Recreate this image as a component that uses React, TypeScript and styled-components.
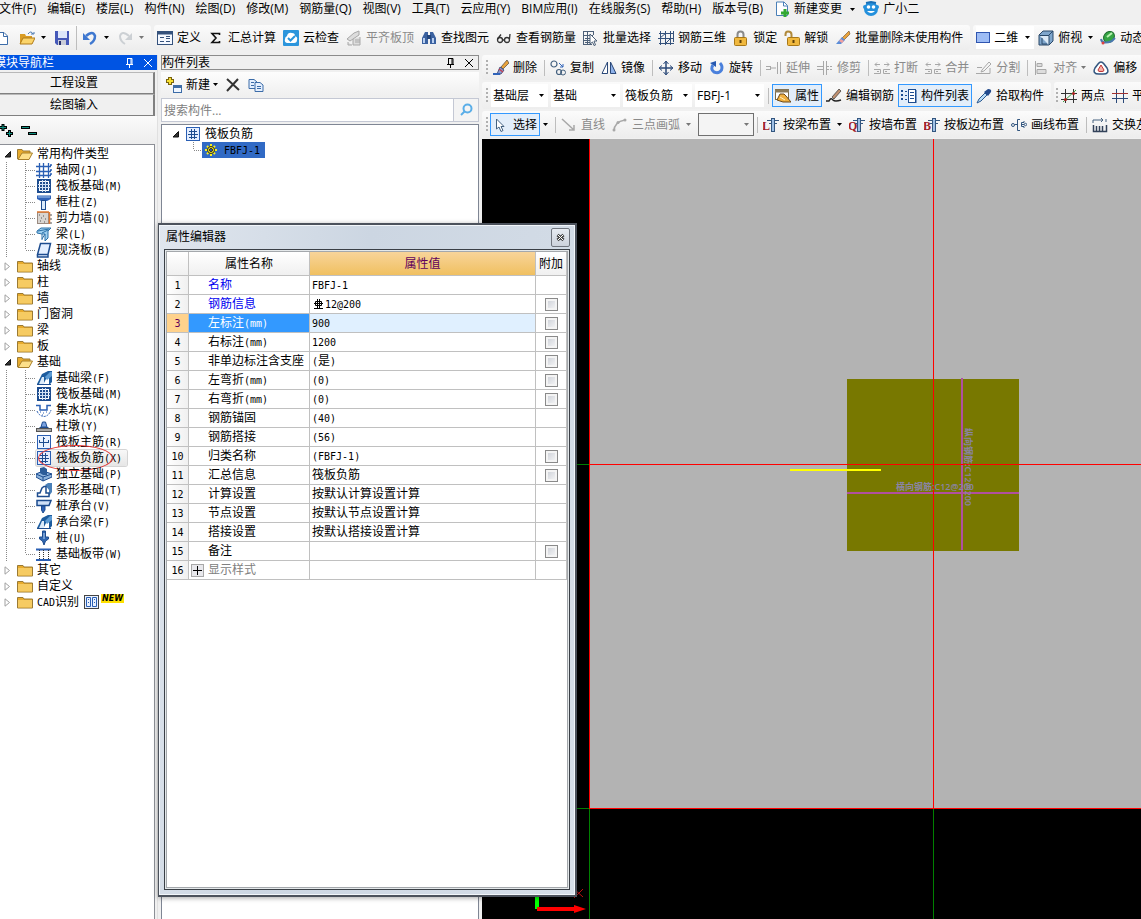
import React, { Fragment, ReactNode } from 'react';
import styled, { createGlobalStyle, css } from 'styled-components';

const uiFont = '"Open Sans", "Noto Sans CJK SC", sans-serif';
const line = '#c0c0c0';

const GlobalStyle = createGlobalStyle`
  *, *::before, *::after { box-sizing: border-box; }
  html { overflow: hidden; }
  body { margin: 0; background: #f0f0f0; color: #000; font: 12px/16px ${uiFont}; }
  button, select, input { font: inherit; color: inherit; margin: 0; padding: 0; border: 0; background: none; border-radius: 0; }
  ul { list-style: none; margin: 0; padding: 0; }
  svg { display: block; flex: none; }
`;

/* ---------- icons ---------- */

const blue = '#2a5fb4';
const navy = '#1d4c8f';
const grey = '#a8a8a8';
const s = (color: string, width = 1) => ({ fill: 'none', stroke: color, strokeWidth: width });

const beamT = (letter: string) => (
  <>
    <text x="-1" y="13" fontSize="12" fontFamily="Liberation Serif" fontWeight="bold" fill="#a01c28">{letter}</text>
    <path d="M4 3.500H16M6 6.500H8M12 6.500H14" {...s('#33567f')} />
    <rect x="8.500" y="1.500" width="3" height="13" fill="#9fc0e6" stroke="#33567f" />
  </>
);
const beam = (
  <>
    <path d="M1 14L6 4L12 1H16V12L13 15V8L11 7L7 15Z" fill="#1d5c9e" />
    <path d="M3 14L6 7H8V14Z" fill="#dcebfa" />
    <path d="M9 7L14 2H16V6L11 10Z" fill="#5c9bd4" />
    <path d="M1 14.500H15" {...s(navy)} />
  </>
);
const raft = (
  <>
    <rect x="1" y="1" width="14" height="14" fill={navy} />
    <rect x="3.500" y="3.500" width="9" height="9" {...s('#fff')} />
    <path d="M6.500 2V14M9.500 2V14M2 6.500H14M2 9.500H14" {...s('#cfe0f5')} />
  </>
);

const icons: Record<string, ReactNode> = {
  newFile: <><path d="M1.500 2.500H11L14.500 6V14.500H1.500Z" fill="#fff" stroke="#3c6ca8" /><path d="M10.500 3V6.500H14" {...s('#3c6ca8')} /></>,
  open: <><path d="M1 14V4H6L7 6H13V14Z" fill="#d99c24" /><path d="M1 14L4 8H16L13 14Z" fill="#fbd46a" stroke="#b07b18" /><path d="M9 4Q12 0 14 4M12 4H15V2" {...s('#4a78b0')} /></>,
  save: <><path d="M1 1H15V15H3L1 13Z" fill="#4558b8" /><rect x="4" y="1" width="9" height="7" fill="#dde6fa" /><rect x="4" y="10" width="8" height="5" fill="#c9ccd8" /><rect x="5" y="11" width="2" height="4" fill="#27306e" /></>,
  undo: <><path d="M4 6Q11 0 13 6Q13 11 8 14" {...s('#3f78d0', 2.500)} /><path d="M1 3V10H8Z" fill="#3f78d0" /></>,
  redo: <><path d="M12 6Q5 0 3 6Q3 11 8 14" {...s('#ccd0d4', 2)} /><path d="M15 3V10H8Z" fill="#ccd0d4" /></>,
  define: <><rect x="0.500" y="1.500" width="15" height="13" fill="#f4f8ff" stroke="#35527c" /><path d="M1 3H15" {...s('#35527c', 3)} /><path d="M3 7.500H7M3 11.500H7M9 6.500H13M9 8.500H13M9 11.500H13" {...s('#35527c')} /></>,
  sigma: <path d="M11.500 5V3.500H4L8 8L4 12.500H11.500V11" {...s('#111', 1.600)} />,
  cloud: <><rect width="16" height="16" rx="1" fill="#2b95dc" /><path d="M4 13Q1 12 2 9Q2 7 4 6Q5 2 9 3Q12 3 12 6Q15 7 14 10Q14 13 11 13Z" fill="#fff" /><path d="M5 8L7.500 10.500L12 6" {...s('#2b95dc', 2)} /></>,
  flatten: <path d="M1 9L8 3L13 1V5L4 11ZM7 9V15H14V7M9 10H14M9 12H14M2 12V15H6" fill="#ddd" stroke={grey} />,
  find: <><path d="M1 14V8L4 2H7V14ZM9 14V2H12L15 8V14Z" fill="#3b62a0" /><rect x="6" y="5" width="4" height="4" fill="#24467c" /><path d="M3 13V8M12 13V8" {...s('#b9cff0', 2)} /></>,
  glasses: <><circle cx="4" cy="10" r="2.500" {...s('#333', 1.300)} /><circle cx="11" cy="10" r="2.500" {...s('#333', 1.300)} /><path d="M1.500 9L5 4.500M13.500 9L14 4M6.500 10H8.500" {...s('#333', 1.300)} /></>,
  batch: <><path d="M.5 1V15M4.500 1V15M0 1.500H10M0 5.500H10M0 10.500H8M0 14.500H9M10.500 1V5M2 8.500H7M2 12.500H8" {...s('#4d6078')} /><path d="M7 4L14 11H11L12.500 15L11 15.500L9.500 12L7 14Z" fill="#fff" stroke="#4d6078" /></>,
  rebar3d: <path d="M1 3.500H16M0 8.500H15M1 13.500H16M2.500 1V15M7.500 1V15M12.500 1V15M2 8L8 3M7 14L13 8M15.500 1V12" {...s('#35527c')} />,
  lock: <><path d="M4.500 8V4.500Q4.500 1.500 7.500 1.500Q10.500 1.500 10.500 4.500V8" {...s('#8a8a8a', 2)} /><rect x="1.500" y="7.500" width="12" height="8" rx="1" fill="#f0b83e" stroke="#a87818" /><path d="M7.500 10V13" {...s('#604008', 2)} /></>,
  unlock: <><path d="M1.500 6V4.500Q1.500 1.500 4 1.500Q7.500 1.500 7.500 4.500V8" {...s('#b08a3c', 2)} /><rect x="3.500" y="7.500" width="12" height="8" rx="1" fill="#f0b83e" stroke="#a87818" /><path d="M9.500 10V13" {...s('#604008', 2)} /></>,
  brush: <><path d="M14 1L7 8L9 10L15 4Z" fill="#e9a33c" stroke="#6a4a28" strokeWidth=".6" /><path d="M7 7L10 10L6 14H1Z" fill="#5a8cd8" /><path d="M6 9L9 11L7 13L4 11Z" fill="#f0a0a0" /></>,
  eraser: <><path d="M14 0L8 7L10 9L16 3Z" fill="#e9a33c" stroke="#333" strokeWidth=".6" /><path d="M7 7L11 10L8 14H4Z" fill="#8d9bd0" stroke="#333c6a" strokeWidth=".8" /><path d="M6 9L10 12" {...s('#c04050', 1.500)} /><path d="M0 14H7" {...s('#2f62b8', 2)} /></>,
  rect: <rect x="0.500" y="2.500" width="13" height="10" fill="#9dbcf5" stroke="#2f55b0" />,
  cube: <><path d="M1 5L5 1H15V11L11 15H1Z" fill="#7fa6cc" stroke="#2a4868" /><path d="M1.500 5.500H11V15" fill="#dbe9f6" stroke="#2a4868" /><path d="M11 5L15 1M4 8V14H9" {...s('#2a4868')} /></>,
  orbit: <><ellipse cx="9" cy="7" rx="5" ry="6" transform="rotate(40 9 7)" fill="#35a544" stroke="#1c6a2c" /><path d="M7 7L12 3" {...s('#b8f0b0', 2)} /><path d="M1 9Q2 15 12 11L15 8" {...s('#4a78b0', 2)} /><circle cx="3" cy="13" r="1.500" fill="#e04040" /></>,
  change: <><path d="M2.500 1H10L13.500 4.500V14.500H2.500Z" fill="#fff" stroke="#4a80b8" /><path d="M9.500 1V5H13" {...s('#4a80b8')} /><path d="M11 8V16M7 12H15" {...s('#32a832', 3)} /></>,
  mascot: <><circle cx="8" cy="8" r="7" fill="#2490dc" /><circle cx="2" cy="6" r="2" fill="#2490dc" /><circle cx="14" cy="6" r="2" fill="#2490dc" /><circle cx="5.500" cy="6" r="1.800" fill="#fff" /><circle cx="10.500" cy="6" r="1.800" fill="#fff" /><path d="M4 10Q8 14 12 10Z" fill="#fff" /><path d="M3 2L8 1L13 2" {...s('#1870b8', 2)} /></>,
  copy: <><circle cx="4" cy="4" r="3" {...s('#44617f', 1.200)} /><circle cx="9" cy="12" r="2.500" {...s('#44617f', 1.200)} /><circle cx="13" cy="12.500" r="2.500" {...s('#44617f')} /><path d="M9 3L13 7M13 4V7H10" {...s('#2f62b8')} /></>,
  mirror: <><path d="M6.500 2V13.500H1Z" fill="#fff" stroke="#2a4878" /><path d="M9.500 2V13.500H15Z" fill="#8fb2ea" stroke="#2a4878" /></>,
  move: <><path d="M8 2V14M2 8H14" {...s('#2a4878', 1.500)} /><path d="M5.500 4L8 1L10.500 4M5.500 12L8 15L10.500 12M4 5.500L1 8L4 10.500M12 5.500L15 8L12 10.500" {...s('#2a4878')} /></>,
  rotate: <><path d="M4 5Q1 9 5 12Q10 14 12.500 10Q14 6 11 3" {...s('#4a80dc', 3)} /><path d="M7 1V7L1 3Z" fill="#2658b0" /></>,
  extend: <path d="M0 6.500H4M0 9.500H4M4 8H10M11.500 2V14M14.500 2V14M4.500 6V10" {...s(grey)} />,
  trim: <path d="M0 6.500H6M0 9.500H6M6.500 1V15M9.500 1V15M10 6.500H12M10 9.500H12M13 6.500H15M13 9.500H15" {...s(grey)} />,
  split: <path d="M1 4.500H6M10 4.500H15M3 2.500L1 4.500L3 6.500M13 2.500L15 4.500L13 6.500M0 9.500H6.500V13.500H0M16 9.500H9.500V13.500H16M3 11.500H5M11 11.500H13" {...s(grey)} />,
  cut: <path d="M1 7.500H6M6 10L13 2L15 4L8 11L5 12ZM0 13.500H14V8" {...s(grey)} />,
  align: <><path d="M2.500 1V15" {...s(grey)} /><path d="M4 3.500H9V6.500H4ZM4 9.500H13V13.500H4Z" fill="#ddd" stroke={grey} /></>,
  offset: <><path d="M5 4Q8 0 11 4L14 8Q17 14 10 14H6Q-1 14 2 8Z" fill="#fff" stroke="#33567f" strokeWidth="1.500" /><path d="M8 5L11 10Q11 12 8 11.500Q5 12 5 10Z" fill="#f4b0a8" stroke="#c03434" /></>,
  props: <><rect x="0.500" y="1.500" width="13" height="10" fill="#fff" stroke="#7a6a4a" /><path d="M0 3H14" {...s('#8a7a5a', 3)} /><path d="M2 12L5 6H9L11 8L16 14H8Z" fill="#f0b040" stroke="#6b4716" /><path d="M5 9L10 12" {...s('#fff0c0')} /></>,
  edit: <><path d="M6 9L13 1L15 3L8 11Z" fill="#c09070" stroke="#333" strokeWidth=".7" /><path d="M0 13H3Q5 9 7 12Q9 14 15 12" {...s('#222', 1.500)} /></>,
  list: <><path d="M1 2V14" stroke={navy} strokeWidth="2" strokeDasharray="2 2" /><path d="M4 3.500H6M4 7.500H6M4 11.500H6" {...s(navy)} /><rect x="7.500" y="1.500" width="7" height="13" fill="#fff" stroke={navy} /><path d="M9 4.500H13M9 7.500H13M9 10.500H13M15 2V15" {...s(navy)} /></>,
  dropper: <><path d="M9 5L3 11L1 15L5 13L11 7Z" fill="#b9dcf6" stroke="#2a5890" /><path d="M8 4L12 8L15 4Q16 1 12 1Z" fill="#234a8c" /></>,
  twoPoints: <><path d="M4.500 1V15M12.500 1V15M0 5.500H16M0 11.500H16" {...s('#333')} /><path d="M2 14L15 2" {...s('#3aa040')} /><circle cx="4.500" cy="11.500" r="1.500" fill="#b02020" /><circle cx="12.500" cy="5.500" r="1.500" fill="#b02020" /></>,
  parallel: <><path d="M4.500 1V15M11.500 1V15" {...s('#2a4878')} /><path d="M0 5.500H16" {...s('#a03030')} /><path d="M0 10.500H16" {...s('#2a4878')} /></>,
  pointer: <path d="M3.500 2V12L6 10L8 14.500L10 13.500L8 9.500H11Z" fill="#fff" stroke="#44617f" />,
  straight: <path d="M1 2L13 13M13 8V13H8" {...s(grey, 1.500)} />,
  arc: <><path d="M2 14Q2 5 13 3" {...s(grey, 1.500)} /><circle cx="2" cy="13" r="1.500" fill={grey} /><circle cx="6" cy="5.500" r="1.500" fill={grey} /><circle cx="13" cy="3" r="1.500" fill={grey} /></>,
  beamL: beamT('L'),
  beamQ: beamT('Q'),
  beamB: beamT('B'),
  drawLine: <><circle cx="2" cy="8" r="1.500" {...s('#33567f')} /><path d="M4 7.500H6.500M11 7.500H13M9 2.500H6.500V13.500H9M13 4V5.500H10.500V9.500H13V11" {...s('#33567f')} /><circle cx="14.500" cy="7.500" r="1.200" {...s('#33567f')} /></>,
  swap: <><path d="M1 6V3H11M9 1L11 3L9 5M14 2V5" {...s('#44617f')} /><path d="M1.500 8V14.500H14.500V8M4.500 9V14M7.500 9V14M10.500 9V14" {...s('#33425a', 1.500)} /></>,
  newItem: <><path d="M4 0V8M0 4H8" {...s('#7a6410', 4)} /><path d="M4 1V7M1 4H7" {...s('#f8e030', 2)} /><rect x="7.500" y="8.500" width="8" height="7" fill="#eef5ff" stroke="#3c6ca8" /><path d="M8 10H15" {...s('#3c6ca8', 2)} /></>,
  remove: <path d="M2 2L14 13M13 2L2 14" {...s('#333', 2)} />,
  pages: <><path d="M1 2.500H6L9 5V11.500H1Z" fill="#e4efff" stroke="#3c6ca8" /><path d="M7 5.500H12L15 8V14.500H7Z" fill="#e4efff" stroke="#3c6ca8" /><path d="M3 5.500H6M3 8.500H6M9 9.500H13M9 11.500H13" {...s('#3c6ca8')} /></>,
  search: <><circle cx="9.500" cy="6.500" r="4" {...s('#5aaee8', 2)} /><path d="M6.500 9.500L3 13" {...s('#5aaee8', 2)} /></>,
  folder: <><path d="M.5 3.500H6L7 5H15.500V14H.5Z" fill="#e8ab2c" stroke="#9a7a34" /><path d="M1 6H15V13.500H1Z" fill="#f6cb62" /></>,
  folderOpen: <><path d="M.5 13V3.500H5L6 5H13V7" fill="#e8ab2c" stroke="#9a7a34" /><path d="M1 13.500L5 7H15.500L12 13.500Z" fill="#fde08a" stroke="#a8802c" /></>,
  gridLines: <path d="M3.500 1V16M7.500 1V16M12.500 1V16M0 4.500H15M0 9.500H15M0 13.500H15M14 3H16M14 8H16M14 12H16" {...s(blue, 1.300)} />,
  raft,
  column: <><path d="M1 1.500H15V5L11 7H5L1 5Z" fill="#2f62b8" /><path d="M2 3H14" {...s('#a8c8f0')} /><rect x="5.500" y="6.500" width="4" height="9" fill="#dcebfa" stroke={navy} /></>,
  wall: <><rect x="1.500" y="2.500" width="11" height="11" fill="#d8d4d0" stroke="#9a8a80" /><path d="M1 2H13M13.500 2V14" {...s('#e07830', 1.500)} /><path d="M3 5H4M7 6H8M5 8H6M9 9H10M4 11H5M8 12H9M14 5H16M14 9H16M14 13H16" {...s('#555')} /></>,
  beamCommon: <><path d="M1 5L5 2H15L12 5V12L9 15V8H6L1 7Z" fill="#9fd0f0" stroke="#2a70a8" /><path d="M2 5L13 3M6 7L12 4M6 8V14M9 8L6 13" {...s('#2a70a8')} /></>,
  slab: <path d="M4.500 1.500H14.500L12 12.500H1.500ZM1.500 12.500V15H12V12.500" fill="#e4efff" stroke={navy} strokeWidth="1.500" />,
  beam,
  pit: <><path d="M0 3.500H4V8H11V3.500H15" {...s(blue, 1.500)} /><path d="M1 9Q3 14 8 14.500Q13 14 15 8" {...s(blue)} strokeDasharray="2 1" /><path d="M4 10H5M7 11H8M10 10H11M6 13H7" {...s(blue)} /></>,
  pier: <><path d="M6.500 4H9.500L11 9H5Z" fill="#7aa2e0" stroke={navy} /><path d="M3.500 9.500H12.500" {...s(navy)} /><rect x="0.500" y="10.500" width="15" height="3" fill="#a8a8a8" stroke="#555" /></>,
  mainBar: <><rect x="1.500" y="1.500" width="13" height="13" fill="#eaf2ff" stroke={blue} /><path d="M7.500 3V13M3 8.500H13M3.500 6V9M12.500 6V9M7 4.500H9" {...s(navy)} /></>,
  negBar: <><rect x="1.500" y="1.500" width="13" height="13" fill="#e4eeff" stroke={blue} /><path d="M6.500 3V13M9.500 3V13M4 5.500H12M3 8.500H13M4 11.500H12" {...s(navy)} /></>,
  isolated: <><path d="M0 8L7 5L16 8V11L7 15L0 11Z" fill="#8fb4dc" stroke={navy} /><path d="M4 2L8 1L11 3V9H7L4 7Z" fill="#2c5c98" /><path d="M7 15V11L0 8M7 11L16 8" {...s(navy)} /></>,
  strip: <><path d="M9 3L12 1H16V10L13 14V8Z" fill="#4a80b8" /><path d="M1.500 14.500V11H4L6 6L8 4.500H10L10 11H13V14.500Z" fill="#fff" stroke={navy} strokeWidth="1.500" /></>,
  pileCap: <><path d="M1 2.500H15L13 7.500H1Z" fill="#cfe0f8" stroke={navy} strokeWidth="1.500" /><path d="M5.500 8H9V12L7 15L5.500 12Z" fill="#2f62b8" stroke={navy} /></>,
  pile: <><path d="M6.500 1H9.500V7H12.500V9L9.500 11L8 15L6.500 11L3.500 9V7H6.500Z" fill="#2f66b0" stroke={navy} /><path d="M8 3V9" {...s('#b8d4f4')} /></>,
  band: <><path d="M0 3.500H15M0 14H15" {...s(blue, 2)} /><path d="M3.500 4V13M7.500 4V13M12.500 4V13" {...s('#333')} strokeDasharray="1 1" /></>,
  gear: <><path d="M7 2V14M1 8H13M3 4L11 12M11 4L3 12" {...s('#f8f020', 2)} /><circle cx="7" cy="8" r="3.500" fill="#f8f020" stroke="#222" /><circle cx="7" cy="8" r="1.500" fill="#316ac5" stroke="#222" /></>,
  cad: <><rect x="0.500" y="1.500" width="14" height="13" fill="#eaf2ff" stroke="#444" /><path d="M2.500 3.500H6.500V12.500H2.500ZM8.500 3.500H12.500V12.500H8.500ZM4 5.500H5M4 8.500H5M10 5.500H11M10 8.500H11" {...s(blue)} /></>,
};

const Icon = ({ name }: { name: string }) => (
  <svg width="16" height="16" viewBox="0 0 16 16" aria-hidden="true">{icons[name]}</svg>
);
const Caret = ({ color = '#000' }: { color?: string }) => (
  <svg width="5" height="3" viewBox="0 0 5 3" aria-hidden="true"><path d="M0 0H5L2.500 3Z" fill={color} /></svg>
);
const Pin = () => (
  <svg width="9" height="10" viewBox="0 0 9 10" aria-hidden="true"><path d="M2 .5H7M2.500 0V6M6 0V6M7 .5V6M1 6.500H8M4.500 7V10" {...s('currentColor')} /></svg>
);
const Cross = () => (
  <svg width="8" height="8" viewBox="0 0 8 8" aria-hidden="true"><path d="M0 0L8 8M8 0L0 8" {...s('currentColor')} /></svg>
);

/* ---------- text with half-width latin runs ---------- */

const Latin = styled.span`
  font-family: "DejaVu Sans Mono", monospace;
  font-size: 10px;
  white-space: pre;
`;
const Mixed = ({ children }: { children: string }) => (
  <span>
    {children.split(/([\x20-\x7e]+)/).map((part, i) =>
      i % 2 ? <Latin key={i}>{part}</Latin> : <Fragment key={i}>{part}</Fragment>)}
  </span>
);

/* ---------- frame ---------- */

const Window = styled.div`
  position: relative;
  display: flex;
  flex-direction: column;
  min-height: 100vh;
  overflow: hidden;
  white-space: nowrap;
`;
const MenuBar = styled.nav`
  display: flex;
  align-items: center;
  gap: 11px;
  height: 18px;
  margin: 0 0 7px -1px;
`;
const MenuItem = styled.button`
  display: flex;
  align-items: center;
  gap: 4px;
  flex: none;
`;
const MenuExtras = styled.div`
  display: flex;
  align-items: center;
  gap: 8px;
`;
const ToolRow = styled.div`
  display: flex;
  gap: 3px;
  overflow: hidden;
  flex: none;
`;
const Band = styled.div<{ $grow?: boolean; $tall?: boolean }>`
  display: flex;
  align-items: center;
  flex: ${p => (p.$grow ? '1 0 auto' : 'none')};
  height: ${p => (p.$tall ? 27 : 25)}px;
  padding-left: 3px;
  border-radius: 3px;
  background: linear-gradient(#fbfbfb, #ededed);
`;
const Tool = styled.button<{ $off?: boolean; $on?: boolean }>`
  display: flex;
  align-items: center;
  gap: 4px;
  flex: none;
  height: 23px;
  margin-right: 7px;
  ${p => p.$off && css`color: #8a8a8a;`}
  ${p => p.$on && css`
    padding: 0 2px;
    margin: 0 4px 0 -3px;
    border: 1px solid #3399ff;
    background: #e3eefa;
  `}
`;
const DropButton = styled.button`
  display: flex;
  align-items: center;
  justify-content: center;
  flex: none;
  width: 11px;
  height: 20px;
  margin: 0 4px 0 -4px;
`;
const Divider = styled.span`
  flex: none;
  width: 1px;
  height: 16px;
  margin-right: 5px;
  background: #bdbdbd;
`;
const Grip = styled.span<{ $tight?: boolean }>`
  flex: none;
  width: 2px;
  height: 15px;
  margin: 0 ${p => (p.$tight ? 3 : 5)}px 0 1px;
  background: repeating-linear-gradient(#b0b0b0 0 2px, transparent 2px 4px);
`;
const Combo = styled.label<{ $w: number; $framed?: boolean }>`
  display: flex;
  align-items: center;
  flex: none;
  width: ${p => p.$w}px;
  height: 23px;
  padding: 0 4px 0 2px;
  margin-right: 3px;
  background: ${p => (p.$framed ? '#f4f4f4' : '#fff')};
  border: ${p => (p.$framed ? '1px solid #707070' : '0')};
`;
const Select = styled.select`
  appearance: none;
  flex: 1;
  min-width: 0;
  outline: 0;
`;

const ToolButton = ({ icon, label, off, on }: { icon: string; label: string; off?: boolean; on?: boolean }) => (
  <Tool $off={off} $on={on} disabled={off}><Icon name={icon} />{label}</Tool>
);
const ComboBox = ({ label, value, width, framed }: { label: string; value: string; width: number; framed?: boolean }) => (
  <Combo $w={width} $framed={framed}>
    <Select aria-label={label} defaultValue={value}><option>{value}</option></Select>
    <Caret color={framed ? '#777' : '#000'} />
  </Combo>
);

const Body = styled.div`
  display: flex;
  flex: 1;
  margin-top: 5px;
  gap: 3px;
`;
const PanelTitle = styled.header<{ $active?: boolean }>`
  display: flex;
  align-items: center;
  flex: none;
  gap: 10px;
  height: 15px;
  padding-right: 5px;
  color: ${p => (p.$active ? '#fff' : '#000')};
  background: ${p => (p.$active ? '#0054e3' : '#f0f0f0')};
  border: ${p => (p.$active ? '0' : '1px solid #8c8c8c')};
  & > span { flex: 1; }
`;

/* ---------- navigation ---------- */

const NavPanel = styled.aside`
  display: flex;
  flex-direction: column;
  flex: none;
  width: 164px;
  margin-left: -6px;
  border-right: 1px solid #e0e0e0;
`;
const NavButtons = styled.div`
  display: flex;
  flex-direction: column;
  margin: 2px 2px 0 0;
`;
const NavButton = styled.button`
  height: 22px;
  background: #f0f0f0;
  border: 1px solid #808080;
  border-width: 1px 2px 1px 1px;
  border-top-color: #b8b8b8;
`;
const NavTools = styled.div`
  display: flex;
  align-items: center;
  gap: 6px;
  height: 28px;
  padding-left: 6px;
  background: linear-gradient(#fbfbfb, #ededed);
`;
const NavTree = styled.ul`
  flex: 1;
  margin-right: 2px;
  padding: 1px 0 0 6px;
  background: #fff;
  border: solid #8c8f96;
  border-width: 1px 1px 0 0;
`;
const dots = 'repeating-linear-gradient(#888 0 1px, transparent 1px 2px)';
const hdots = 'repeating-linear-gradient(90deg, #888 0 1px, transparent 1px 2px)';
const GroupRow = styled.button`
  display: flex;
  align-items: center;
  height: 16px;
  padding-left: 4px;
  & > svg { margin-right: 6px; }
  & > svg + svg { margin-right: 4px; }
`;
const ItemRow = styled.button<{ $last?: boolean }>`
  position: relative;
  display: flex;
  align-items: center;
  height: 16px;
  padding-left: 36px;
  background:
    ${dots} 6px 0 / 1px 100% no-repeat,
    ${dots} 25px 0 / 1px ${p => (p.$last ? '8px' : '100%')} no-repeat,
    ${hdots} 26px 8px / 10px 1px no-repeat;
`;
const ItemFace = styled.span<{ $hot?: boolean }>`
  display: flex;
  align-items: center;
  gap: 4px;
  height: 16px;
  padding-right: 5px;
  border-radius: 2px;
  ${p => p.$hot && css`
    background: linear-gradient(#f8f8f8, #e6e6e6);
    box-shadow: 0 0 0 1px #d4d4d4;
  `}
`;
const Ring = styled.span`
  position: absolute;
  left: 38px;
  top: -5px;
  width: 75px;
  height: 26px;
  border: 1px solid #e03838;
  border-radius: 50%;
`;
const NewBadge = styled.span`
  align-self: flex-start;
  height: 9px;
  padding: 0 1px;
  background: #ffe000;
  font: italic bold 8px/9px "DejaVu Sans", sans-serif;
`;
const Twisty = ({ open }: { open?: boolean }) => (
  <svg width="7" height="9" viewBox="0 0 7 9" aria-hidden="true">
    {open ? <path d="M6.500 1.500V7H1Z" fill="#333" stroke="#111" /> : <path d="M1 .8V8.200L5.500 4.500Z" fill="#fff" stroke="#a0a0a0" />}
  </svg>
);

type Item = [string, string];
const groups: { name: string; items?: Item[] }[] = [
  { name: '常用构件类型', items: [['gridLines', '轴网(J)'], ['raft', '筏板基础(M)'], ['column', '框柱(Z)'], ['wall', '剪力墙(Q)'], ['beamCommon', '梁(L)'], ['slab', '现浇板(B)']] },
  { name: '轴线' }, { name: '柱' }, { name: '墙' }, { name: '门窗洞' }, { name: '梁' }, { name: '板' },
  { name: '基础', items: [['beam', '基础梁(F)'], ['raft', '筏板基础(M)'], ['pit', '集水坑(K)'], ['pier', '柱墩(Y)'], ['mainBar', '筏板主筋(R)'], ['negBar', '筏板负筋(X)'], ['isolated', '独立基础(P)'], ['strip', '条形基础(T)'], ['pileCap', '桩承台(V)'], ['beam', '承台梁(F)'], ['pile', '桩(U)'], ['band', '基础板带(W)']] },
  { name: '其它' }, { name: '自定义' }, { name: 'CAD识别' },
];

/* ---------- component list ---------- */

const ListPanel = styled.section`
  display: flex;
  flex-direction: column;
  flex: none;
  width: 318px;
`;
const ListTools = styled.div`
  display: flex;
  align-items: center;
  height: 25px;
  margin-top: 2px;
  padding-left: 5px;
  background: linear-gradient(#fdfdfd, #efefef);
`;
const SearchRow = styled.form`
  display: flex;
  align-items: center;
  height: 24px;
  margin: 1px 0 2px;
  border: 1px solid #c4c8d4;
  background: #f4f4f4;
`;
const SearchInput = styled.input`
  flex: 1;
  height: 100%;
  padding-left: 2px;
  background: #fff;
  border-right: 1px solid #c4c8d4;
  outline: 0;
  &::placeholder { color: #808080; opacity: 1; }
`;
const SearchButton = styled.button`
  display: flex;
  justify-content: center;
  width: 24px;
`;
const ListTree = styled.ul`
  flex: 1;
  padding: 1px 0 0 10px;
  background: #fff;
  border: 1px solid #7f8694;
  border-bottom: 0;
`;
const ListRoot = styled.button`
  display: flex;
  align-items: center;
  gap: 4px;
  height: 16px;
  & > svg:first-child { margin-right: 2px; }
`;
const ListChild = styled.div`
  display: flex;
  height: 16px;
  padding-left: 30px;
  background:
    ${dots} 21px 0 / 1px 8px no-repeat,
    ${hdots} 22px 8px / 8px 1px no-repeat;
`;
const ListSelected = styled.button`
  display: flex;
  align-items: center;
  gap: 4px;
  width: 63px;
  padding-left: 2px;
  background: #316ac5;
`;

/* ---------- workspace ---------- */

const Work = styled.main`
  display: flex;
  flex-direction: column;
  flex: 1;
  min-width: 0;
`;
const WorkTools = styled.div`
  display: flex;
  flex-direction: column;
  gap: 2px;
  height: 84px;
`;
const Canvas = styled.div`
  display: flex;
  flex: 1;
  background: #000;
  overflow: hidden;
`;
const Drawing = styled.svg`
  width: 100%;
  min-height: 780px;
  text { font: 600 9px "Open Sans", "Noto Sans CJK SC", sans-serif; fill: #8a84a4; }
`;

/* ---------- property dialog ---------- */

const Dialog = styled.section`
  position: absolute;
  left: 158px;
  top: 223px;
  width: 419px;
  padding: 0 5px 5px;
  background: linear-gradient(100deg, #e0e6ee, #ccd6e2 40%, #d6dee8);
  border: 1px solid #4c525c;
  border-width: 2px 2px 2px 1px;
  box-shadow: inset 0 0 0 1px #f2f6fa, 0 1px 5px rgba(0, 0, 0, .35);
`;
const DialogTitle = styled.header`
  display: flex;
  align-items: center;
  justify-content: space-between;
  height: 24px;
  padding: 0 0 0 2px;
`;
const CloseButton = styled.button`
  display: flex;
  align-items: center;
  justify-content: center;
  width: 19px;
  height: 19px;
  border: 1px solid #70757e;
  border-radius: 2px;
  background: linear-gradient(#e6eaf0, #ccd2dc);
`;
const DialogBody = styled.div`
  min-height: 641px;
  padding: 1px;
  background: #fff;
  border: 1px solid #3a3f46;
  box-shadow: inset 0 0 0 1px #e4e8ea, inset 0 0 0 2px #a4a8ac;
`;
const PropTable = styled.table`
  width: 400px;
  margin: 1px;
  table-layout: fixed;
  border-collapse: separate;
  border-spacing: 0;
`;
const HeadCell = styled.th<{ $w?: number; $gold?: boolean }>`
  width: ${p => (p.$w ? p.$w + 'px' : 'auto')};
  height: 24px;
  padding: 0;
  font-weight: 400;
  color: ${p => (p.$gold ? '#60005c' : '#000')};
  background: ${p => (p.$gold ? 'linear-gradient(#f8d49a, #f0c060)' : 'linear-gradient(#fff, #f0f0f0)')};
  border: solid ${line};
  border-width: 0 1px 1px 0;
`;
const IndexCell = styled.th<{ $on?: boolean }>`
  height: 19px;
  padding: 0;
  font-weight: 400;
  line-height: 16px;
  color: ${p => (p.$on ? '#60005c' : '#000')};
  background: ${p => (p.$on ? '#ffd28c' : 'linear-gradient(90deg, #fff, #f0f0f0)')};
  border: solid ${line};
  border-width: 0 1px 1px 0;
`;
const NameCell = styled.td<{ $on?: boolean; $color?: string }>`
  padding: 0 0 0 2px;
  line-height: 16px;
  color: ${p => (p.$on ? '#fff' : p.$color || '#000')};
  background: ${p => (p.$on ? '#3399ff' : '#fff')};
  border: solid ${line};
  border-width: 0 1px 1px 0;
`;
const NameLine = styled.div`
  display: flex;
  align-items: center;
  height: 18px;
`;
const Lead = styled.span`
  display: flex;
  flex: none;
  width: 17px;
`;
const Expander = styled.button`
  display: flex;
  align-items: center;
  justify-content: center;
  width: 13px;
  height: 13px;
  background: #e8e8ec;
  border: 1px solid #a8a8a8;
`;
const ValueCell = styled.td<{ $on?: boolean }>`
  padding: 0 0 0 2px;
  line-height: 16px;
  background: ${p => (p.$on ? '#e0f0ff' : '#fff')};
  border: solid ${line};
  border-width: 0 1px 1px 0;
`;
const ValueLine = styled.span`
  display: flex;
  align-items: center;
  height: 18px;
`;
const CheckCell = styled.td`
  padding: 0;
  border: solid ${line};
  border-width: 0 1px 1px 0;
`;
const Check = styled.input`
  appearance: none;
  display: block;
  width: 13px;
  height: 13px;
  margin: 0 auto;
  border: 1px solid #8a8a8a;
  background: linear-gradient(135deg, #c8ccd4, #fafafa);
  box-shadow: inset 0 0 0 2px #f4f4f4;
`;

const RebarGrade = () => (
  <svg width="13" height="12" viewBox="0 0 13 12" role="img" aria-label="C">
    <path d="M5.500 1V10M7.500 1V10M2 10.500H11M3.500 3.500H9.500V7.500H3.500ZM2 5.500H11" {...s('#000')} />
  </svg>
);

type Row = { name: string; value: string; check?: boolean; color?: string; grade?: boolean; sub?: boolean };
const rows: Row[] = [
  { name: '名称', value: 'FBFJ-1', color: '#0000f0' },
  { name: '钢筋信息', value: '12@200', color: '#0000f0', check: true, grade: true },
  { name: '左标注(mm)', value: '900', check: true },
  { name: '右标注(mm)', value: '1200', check: true },
  { name: '非单边标注含支座', value: '(是)', check: true },
  { name: '左弯折(mm)', value: '(0)', check: true },
  { name: '右弯折(mm)', value: '(0)', check: true },
  { name: '钢筋锚固', value: '(40)' },
  { name: '钢筋搭接', value: '(56)' },
  { name: '归类名称', value: '(FBFJ-1)', check: true },
  { name: '汇总信息', value: '筏板负筋', check: true },
  { name: '计算设置', value: '按默认计算设置计算' },
  { name: '节点设置', value: '按默认节点设置计算' },
  { name: '搭接设置', value: '按默认搭接设置计算' },
  { name: '备注', value: '', check: true },
  { name: '显示样式', value: '', color: '#808080', sub: true },
];
const activeRow = 2;

const menus = ['文件(F)', '编辑(E)', '楼层(L)', '构件(N)', '绘图(D)', '修改(M)', '钢筋量(Q)', '视图(V)', '工具(T)', '云应用(Y)', 'BIM应用(I)', '在线服务(S)', '帮助(H)', '版本号(B)'];

const FileBand = styled(Band)`
  width: 158px;
  margin-left: -7px;
  padding-left: 0;
  ${Tool} { margin-right: 3px; }
  ${Tool} + ${Tool} { margin-left: 7px; }
  ${DropButton} { margin: 0 5px 0 0; }
  ${Divider} { height: 24px; margin: 0 5px 0 3px; }
`;
const ViewCombo = styled.label`
  display: flex;
  align-items: center;
  gap: 2px;
  flex: none;
  width: 58px;
  height: 23px;
  margin-right: 4px;
  padding-right: 4px;
  background: #fff;
`;
const PointBand = styled(Band)`
  padding-left: 1px;
`;
const ShortDivider = styled(Divider)`
  margin: 0 6px 0 1px;
`;
const NewCaret = styled.span`
  margin: 0 7px 0 -4px;
`;
const CadMark = styled.span`
  display: flex;
  gap: 1px;
  height: 16px;
  margin-left: 5px;
`;

export default function App() {
  return (
    <Window>
      <GlobalStyle />
      <MenuBar aria-label="主菜单">
        {menus.map(m => <MenuItem key={m}>{m}</MenuItem>)}
        <MenuExtras>
          <MenuItem><Icon name="change" />新建变更</MenuItem>
          <Caret />
          <MenuItem><Icon name="mascot" />广小二</MenuItem>
        </MenuExtras>
      </MenuBar>

      <ToolRow>
        <FileBand>
          <Tool aria-label="新建"><Icon name="newFile" /></Tool>
          <Tool aria-label="打开"><Icon name="open" /></Tool>
          <DropButton aria-label="最近文件"><Caret /></DropButton>
          <Tool aria-label="保存"><Icon name="save" /></Tool>
          <Divider />
          <Tool aria-label="撤销"><Icon name="undo" /></Tool>
          <DropButton aria-label="撤销列表"><Caret /></DropButton>
          <Tool aria-label="恢复" disabled><Icon name="redo" /></Tool>
          <DropButton aria-label="恢复列表" disabled><Caret color="#777" /></DropButton>
        </FileBand>
        <Band>
          <ToolButton icon="define" label="定义" />
          <ToolButton icon="sigma" label="汇总计算" />
          <ToolButton icon="cloud" label="云检查" />
          <ToolButton icon="flatten" label="平齐板顶" off />
          <ToolButton icon="find" label="查找图元" />
          <ToolButton icon="glasses" label="查看钢筋量" />
          <ToolButton icon="batch" label="批量选择" />
          <ToolButton icon="rebar3d" label="钢筋三维" />
          <ToolButton icon="lock" label="锁定" />
          <ToolButton icon="unlock" label="解锁" />
          <ToolButton icon="brush" label="批量删除未使用构件" />
        </Band>
        <Band $grow>
          <ViewCombo>
            <Icon name="rect" />
            <Select aria-label="视图模式" defaultValue="二维"><option>二维</option></Select>
            <Caret />
          </ViewCombo>
          <ToolButton icon="cube" label="俯视" />
          <DropButton aria-label="俯视选项"><Caret /></DropButton>
          <ToolButton icon="orbit" label="动态观察" />
        </Band>
      </ToolRow>

      <Body>
        <NavPanel>
          <PanelTitle $active><span>模块导航栏</span><Pin /><Cross /></PanelTitle>
          <NavButtons>
            <NavButton>工程设置</NavButton>
            <NavButton>绘图输入</NavButton>
          </NavButtons>
          <NavTools>
            <svg width="14" height="15" viewBox="0 0 14 15" role="img" aria-label="全部展开">
              <path d="M3 1V8M0 4.500H7M9.500 7V14M6 10.500H13" {...s('#000', 3)} /><path d="M3 2V7M0 4.500H6M9.500 8V13M7 10.500H12" {...s('#109080')} />
            </svg>
            <svg width="18" height="15" viewBox="0 0 18 15" role="img" aria-label="全部折叠">
              <path d="M1 4.500H10M8 10.500H17" {...s('#000', 3)} /><path d="M2 4.500H9M9 10.500H16" {...s('#109080')} />
            </svg>
          </NavTools>
          <NavTree>
            {groups.map(g => (
              <li key={g.name}>
                <GroupRow>
                  <Twisty open={!!g.items} />
                  <Icon name={g.items ? 'folderOpen' : 'folder'} />
                  <Mixed>{g.name}</Mixed>
                  {g.name === 'CAD识别' && <CadMark><Icon name="cad" /><NewBadge>NEW</NewBadge></CadMark>}
                </GroupRow>
                {g.items && (
                  <ul>
                    {g.items.map(([icon, label], i) => (
                      <li key={label}>
                        <ItemRow $last={i === g.items!.length - 1}>
                          <ItemFace $hot={label === '筏板负筋(X)'}><Icon name={icon} /><Mixed>{label}</Mixed></ItemFace>
                          {label === '筏板负筋(X)' && <Ring />}
                        </ItemRow>
                      </li>
                    ))}
                  </ul>
                )}
              </li>
            ))}
          </NavTree>
        </NavPanel>

        <ListPanel>
          <PanelTitle><span>构件列表</span><Pin /><Cross /></PanelTitle>
          <ListTools>
            <ToolButton icon="newItem" label="新建" />
            <NewCaret><Caret /></NewCaret>
            <Tool aria-label="删除"><Icon name="remove" /></Tool>
            <Tool aria-label="复制"><Icon name="pages" /></Tool>
          </ListTools>
          <SearchRow onSubmit={e => e.preventDefault()}>
            <SearchInput aria-label="搜索构件" placeholder="搜索构件..." />
            <SearchButton aria-label="搜索"><Icon name="search" /></SearchButton>
          </SearchRow>
          <ListTree>
            <li>
              <ListRoot><Twisty open /><Icon name="negBar" />筏板负筋</ListRoot>
              <ListChild><ListSelected><Icon name="gear" /><Mixed>FBFJ-1</Mixed></ListSelected></ListChild>
            </li>
          </ListTree>
        </ListPanel>

        <Work>
          <WorkTools>
            <ToolRow>
              <Band $grow>
                <Grip />
                <ToolButton icon="eraser" label="删除" />
                <Divider />
                <ToolButton icon="copy" label="复制" />
                <ToolButton icon="mirror" label="镜像" />
                <Divider />
                <ToolButton icon="move" label="移动" />
                <ToolButton icon="rotate" label="旋转" />
                <Divider />
                <ToolButton icon="extend" label="延伸" off />
                <ToolButton icon="trim" label="修剪" off />
                <Divider />
                <ToolButton icon="split" label="打断" off />
                <ToolButton icon="split" label="合并" off />
                <ToolButton icon="cut" label="分割" off />
                <Divider />
                <Tool $off disabled><Icon name="align" />对齐<Caret color="#777" /></Tool>
                <ToolButton icon="offset" label="偏移" />
              </Band>
            </ToolRow>
            <ToolRow>
              <Band $tall>
                <Grip $tight />
                <ComboBox label="楼层" value="基础层" width={57} />
                <ComboBox label="构件类别" value="基础" width={69} />
                <ComboBox label="构件类型" value="筏板负筋" width={69} />
                <ComboBox label="构件" value="FBFJ-1" width={69} />
                <ShortDivider />
                <ToolButton icon="props" label="属性" on />
                <ToolButton icon="edit" label="编辑钢筋" />
                <ToolButton icon="list" label="构件列表" on />
                <ToolButton icon="dropper" label="拾取构件" />
              </Band>
              <PointBand $grow $tall>
                <Grip $tight />
                <ToolButton icon="twoPoints" label="两点" />
                <ToolButton icon="parallel" label="平行" />
              </PointBand>
            </ToolRow>
            <ToolRow>
              <Band $grow $tall>
                <Grip />
                <ToolButton icon="pointer" label="选择" on />
                <DropButton aria-label="选择方式"><Caret /></DropButton>
                <Divider />
                <ToolButton icon="straight" label="直线" off />
                <ToolButton icon="arc" label="三点画弧" off />
                <DropButton aria-label="画弧方式"><Caret color="#777" /></DropButton>
                <ComboBox label="参数" value="" width={56} framed />
                <Divider />
                <ToolButton icon="beamL" label="按梁布置" />
                <DropButton aria-label="按梁布置方式"><Caret /></DropButton>
                <ToolButton icon="beamQ" label="按墙布置" />
                <ToolButton icon="beamB" label="按板边布置" />
                <ToolButton icon="drawLine" label="画线布置" />
                <Divider />
                <ToolButton icon="swap" label="交换左右标注" />
              </Band>
            </ToolRow>
          </WorkTools>
          <Canvas>
            <Drawing role="img" aria-label="绘图区">
              <rect x="107" y="0" width="100%" height="670" fill="#b3b3b3" />
              <rect x="365" y="240" width="172" height="172" fill="#787800" />
              <g shapeRendering="crispEdges" fill="none">
                <path d="M0 325.500H107M0 669.500H107M107.500 669V2000M451.500 669V2000" stroke="#008000" />
                <path d="M365 354H537M480 239V411" stroke="#b050a0" strokeWidth="2" />
                <path d="M107.500 0V670M451.500 0V670M107 325.500H4000M107 669.500H4000" stroke="#f00" />
                <path d="M308 331H399" stroke="#ff0" strokeWidth="2" />
                <path d="M55 750V770" stroke="#0f0" strokeWidth="4" />
                <path d="M55 770H94" stroke="#f00" strokeWidth="4" />
              </g>
              <path d="M92 766L104 770L92 774Z" fill="#f00" />
              <path d="M92 750L101 758M101 750L92 759" stroke="#c01010" />
              <text x="414" y="351">横向钢筋:C12@200</text>
              <text transform="translate(483 289) rotate(90)">纵向钢筋:C12@200</text>
            </Drawing>
          </Canvas>
        </Work>
      </Body>

      <Dialog role="dialog" aria-label="属性编辑器">
        <DialogTitle>属性编辑器<CloseButton aria-label="关闭"><svg width="9" height="9" viewBox="0 0 9 9"><path d="M1.500 2L7.500 7M7.500 2L1.500 7" {...s('#444', 3)} /><path d="M2 2L7 7M7 2L2 7" {...s('#fff')} /></svg></CloseButton></DialogTitle>
        <DialogBody>
          <PropTable>
            <thead>
              <tr>
                <HeadCell $w={22} aria-label="序号" />
                <HeadCell $w={121}>属性名称</HeadCell>
                <HeadCell $gold>属性值</HeadCell>
                <HeadCell $w={31}>附加</HeadCell>
              </tr>
            </thead>
            <tbody>
              {rows.map((r, i) => (
                <tr key={r.name}>
                  <IndexCell scope="row" $on={i === activeRow}><Mixed>{String(i + 1)}</Mixed></IndexCell>
                  <NameCell $on={i === activeRow} $color={r.color}>
                    <NameLine>
                      <Lead>{r.sub && <Expander aria-label="展开"><svg width="9" height="9" viewBox="0 0 9 9"><path d="M4.500 0V9M0 4.500H9" {...s('#000')} /></svg></Expander>}</Lead>
                      <Mixed>{r.name}</Mixed>
                    </NameLine>
                  </NameCell>
                  <ValueCell $on={i === activeRow}><ValueLine>{r.grade && <RebarGrade />}<Mixed>{r.value}</Mixed></ValueLine></ValueCell>
                  <CheckCell>{r.check && <Check type="checkbox" aria-label={r.name + '附加'} />}</CheckCell>
                </tr>
              ))}
            </tbody>
          </PropTable>
        </DialogBody>
      </Dialog>
    </Window>
  );
}
